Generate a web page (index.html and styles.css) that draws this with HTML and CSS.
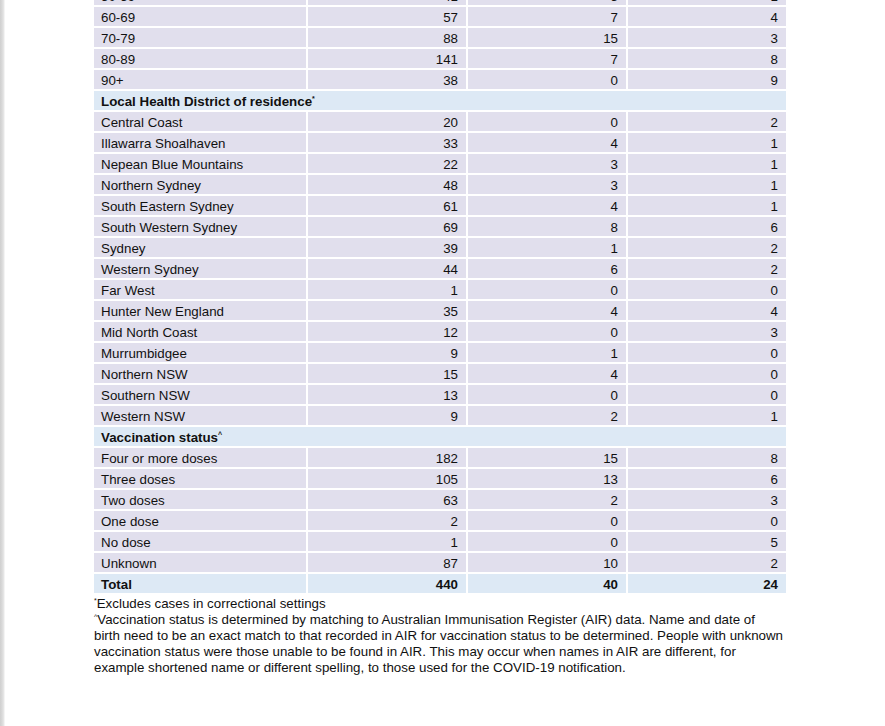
FILE: index.html
```html
<!DOCTYPE html>
<html lang="en">
<head>
<meta charset="utf-8">
<title>Cases table</title>
<link rel="stylesheet" href="styles.css">
</head>
<body>
<div class="page">
  <div class="tbl">
    <div class="c">50-59</div><div class="c n">41</div><div class="c n">5</div><div class="c n">1</div>
    <div class="c">60-69</div><div class="c n">57</div><div class="c n">7</div><div class="c n">4</div>
    <div class="c">70-79</div><div class="c n">88</div><div class="c n">15</div><div class="c n">3</div>
    <div class="c">80-89</div><div class="c n">141</div><div class="c n">7</div><div class="c n">8</div>
    <div class="c">90+</div><div class="c n">38</div><div class="c n">0</div><div class="c n">9</div>
    <div class="h">Local Health District of residence<sup>*</sup></div>
    <div class="c">Central Coast</div><div class="c n">20</div><div class="c n">0</div><div class="c n">2</div>
    <div class="c">Illawarra Shoalhaven</div><div class="c n">33</div><div class="c n">4</div><div class="c n">1</div>
    <div class="c">Nepean Blue Mountains</div><div class="c n">22</div><div class="c n">3</div><div class="c n">1</div>
    <div class="c">Northern Sydney</div><div class="c n">48</div><div class="c n">3</div><div class="c n">1</div>
    <div class="c">South Eastern Sydney</div><div class="c n">61</div><div class="c n">4</div><div class="c n">1</div>
    <div class="c">South Western Sydney</div><div class="c n">69</div><div class="c n">8</div><div class="c n">6</div>
    <div class="c">Sydney</div><div class="c n">39</div><div class="c n">1</div><div class="c n">2</div>
    <div class="c">Western Sydney</div><div class="c n">44</div><div class="c n">6</div><div class="c n">2</div>
    <div class="c">Far West</div><div class="c n">1</div><div class="c n">0</div><div class="c n">0</div>
    <div class="c">Hunter New England</div><div class="c n">35</div><div class="c n">4</div><div class="c n">4</div>
    <div class="c">Mid North Coast</div><div class="c n">12</div><div class="c n">0</div><div class="c n">3</div>
    <div class="c">Murrumbidgee</div><div class="c n">9</div><div class="c n">1</div><div class="c n">0</div>
    <div class="c">Northern NSW</div><div class="c n">15</div><div class="c n">4</div><div class="c n">0</div>
    <div class="c">Southern NSW</div><div class="c n">13</div><div class="c n">0</div><div class="c n">0</div>
    <div class="c">Western NSW</div><div class="c n">9</div><div class="c n">2</div><div class="c n">1</div>
    <div class="h">Vaccination status<sup>^</sup></div>
    <div class="c">Four or more doses</div><div class="c n">182</div><div class="c n">15</div><div class="c n">8</div>
    <div class="c">Three doses</div><div class="c n">105</div><div class="c n">13</div><div class="c n">6</div>
    <div class="c">Two doses</div><div class="c n">63</div><div class="c n">2</div><div class="c n">3</div>
    <div class="c">One dose</div><div class="c n">2</div><div class="c n">0</div><div class="c n">0</div>
    <div class="c">No dose</div><div class="c n">1</div><div class="c n">0</div><div class="c n">5</div>
    <div class="c">Unknown</div><div class="c n">87</div><div class="c n">10</div><div class="c n">2</div>
    <div class="c t">Total</div><div class="c t n">440</div><div class="c t n">40</div><div class="c t n">24</div>
  </div>
  <div class="notes">
    <p><sup>*</sup>Excludes cases in correctional settings</p>
    <p><sup>^</sup>Vaccination status is determined by matching to Australian Immunisation Register (AIR) data. Name and date of<br>birth need to be an exact match to that recorded in AIR for vaccination status to be determined. People with unknown<br>vaccination status were those unable to be found in AIR. This may occur when names in AIR are different, for<br>example shortened name or different spelling, to those used for the COVID-19 notification.</p>
  </div>
</div>
</body>
</html>
```
FILE: styles.css
```css
html, body {
  margin: 0;
  padding: 0;
}
body {
  height: 726px;
  overflow: hidden;
  background: linear-gradient(to right, #cfcfcf 0, #d9d9d9 2px, #e9e9e9 4px, #ffffff 5px, #ffffff 100%);
  font-family: "Liberation Sans", Arial, sans-serif;
  font-size: 13.33px;
  color: #111111;
}
.page {
  padding-left: 94px;
  margin-top: -14px;
}
.tbl {
  display: grid;
  grid-template-columns: 212px 158px 158px 158px;
  grid-auto-rows: 19px;
  gap: 2px;
  width: 692px;
}
.c {
  background: #e1dfed;
  line-height: 19px;
  padding: 1px 8px 0 7px;
  white-space: nowrap;
}
.n {
  text-align: right;
}
.h {
  grid-column: 1 / -1;
  background: #dde9f5;
  line-height: 19px;
  padding: 1px 7px 0;
  font-weight: bold;
}
.t {
  background: #dde9f5;
  font-weight: bold;
}
sup {
  font-size: 7px;
  line-height: 0;
  vertical-align: 5px;
  font-weight: normal;
}
.h sup {
  font-weight: bold;
}
.notes {
  width: 720px;
  margin-top: 3px;
  line-height: 16px;
  white-space: nowrap;
}
.notes p {
  margin: 0;
}
```
